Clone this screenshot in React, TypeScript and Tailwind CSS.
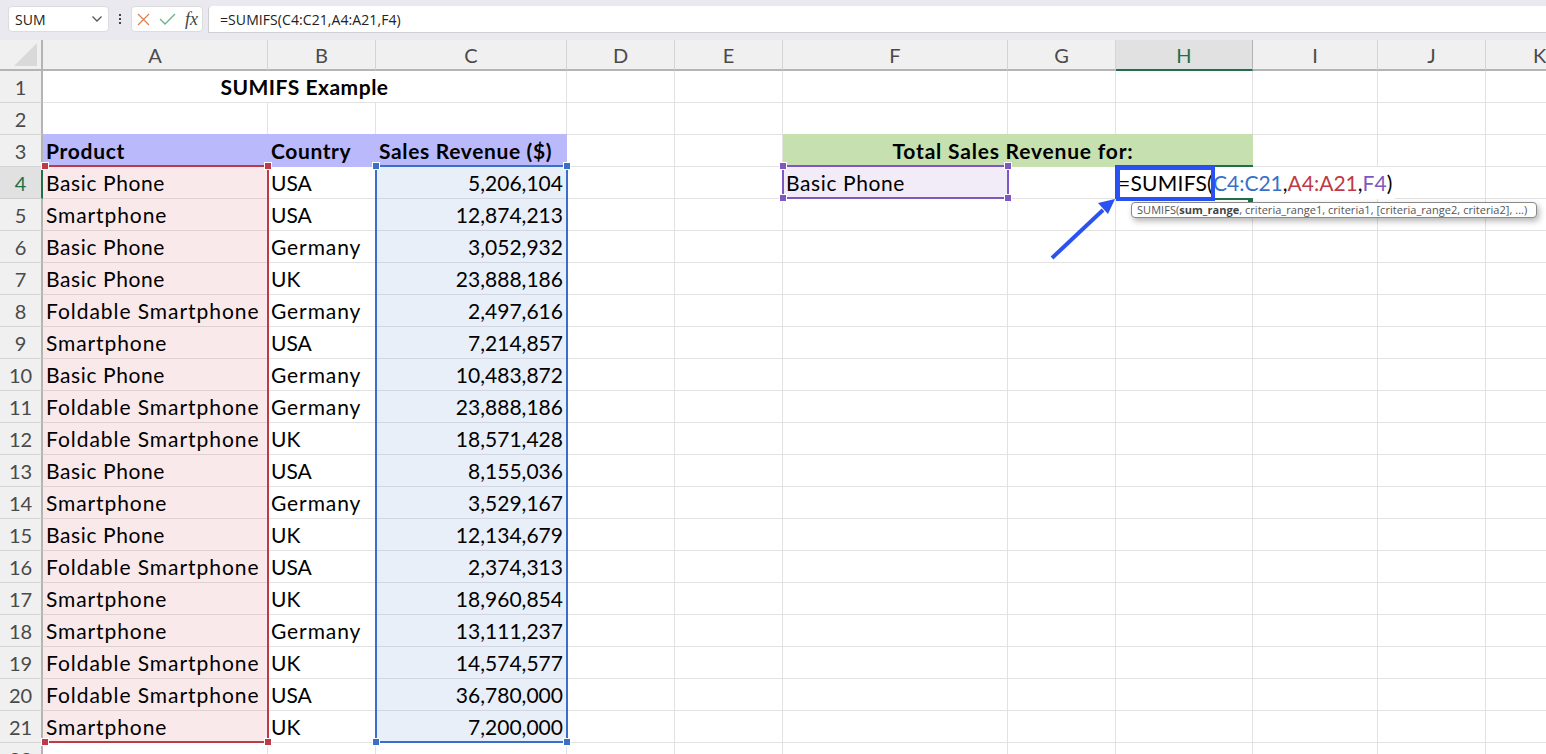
import React from "react";

const cols = ["A", "B", "C", "D", "E", "F", "G", "H", "I", "J", "K"];
const rows: [string, string, string][] = [
  ["Basic Phone", "USA", "5,206,104"],
  ["Smartphone", "USA", "12,874,213"],
  ["Basic Phone", "Germany", "3,052,932"],
  ["Basic Phone", "UK", "23,888,186"],
  ["Foldable Smartphone", "Germany", "2,497,616"],
  ["Smartphone", "USA", "7,214,857"],
  ["Basic Phone", "Germany", "10,483,872"],
  ["Foldable Smartphone", "Germany", "23,888,186"],
  ["Foldable Smartphone", "UK", "18,571,428"],
  ["Basic Phone", "USA", "8,155,036"],
  ["Smartphone", "Germany", "3,529,167"],
  ["Basic Phone", "UK", "12,134,679"],
  ["Foldable Smartphone", "USA", "2,374,313"],
  ["Smartphone", "UK", "18,960,854"],
  ["Smartphone", "Germany", "13,111,237"],
  ["Foldable Smartphone", "UK", "14,574,577"],
  ["Foldable Smartphone", "USA", "36,780,000"],
  ["Smartphone", "UK", "7,200,000"],
];

const track: Record<string, string> = {
  "Basic Phone": "tracking-[0.6px]",
  Smartphone: "tracking-[0.9px]",
  "Foldable Smartphone": "tracking-[0.95px]",
  Germany: "tracking-[0.9px]",
  USA: "",
  UK: "",
};

const cell = "border-r border-b border-[#e2e2e2] flex items-center min-w-0 whitespace-nowrap";
const rowHead = "border-r-2 border-b border-r-[#b4b4b4] border-b-[#d4d4d4] bg-[#f0f0f0] text-[#4a4a4a] flex items-center justify-center text-[20px]";
const pink = "bg-[#f9e9ea] border-b-[#dfd0d2] border-r-[#f9e9ea] pl-[3px]";
const blue = "bg-[#e9eff8] border-b-[#cfd6df] border-r-[#e9eff8] justify-end pr-[3px] tracking-[0.02px]";

function Handle({ className }: { className: string }) {
  return <div className={"absolute w-[8px] h-[8px] border border-white " + className} />;
}

function Blanks({ n }: { n: number }) {
  return (
    <>
      {Array.from({ length: n }).map((_, i) => (
        <div key={i} className={cell} />
      ))}
    </>
  );
}

export default function App() {
  return (
    <div
      className="w-[1546px] h-[754px] overflow-hidden bg-white text-black text-[21px] flex flex-col"
      style={{ fontFamily: '"Lato", "Open Sans", sans-serif' }}
    >
      {/* formula bar */}
      <div className="h-[40px] shrink-0 bg-[#e9e9ef] flex items-start pt-[6px] pl-[8px]">
        <div className="w-[101px] h-[26px] bg-white rounded-[4px] border border-[#dcdcdc] flex items-center justify-between pl-[6px] pr-[5px] text-[14px] text-[#222]">
          <span style={{ fontFamily: '"Open Sans", sans-serif' }}>SUM</span>
          <svg width="12" height="8" viewBox="0 0 12 8" fill="none" stroke="#555" strokeWidth="1.3">
            <path d="M1.5 1.5 L6 6 L10.5 1.5" />
          </svg>
        </div>
        <div className="w-[22px] h-[26px] flex flex-col items-center justify-center gap-[2px]">
          <span className="w-[2px] h-[2px] bg-[#444]" />
          <span className="w-[2px] h-[2px] bg-[#444]" />
          <span className="w-[2px] h-[2px] bg-[#444]" />
        </div>
        <div className="w-[72px] h-[26px] bg-white rounded-[4px] border border-[#dcdcdc] flex items-center pl-[5px] gap-[9px]">
          <svg width="13" height="13" viewBox="0 0 13 13" fill="none" stroke="#dc8258" strokeWidth="1.3">
            <path d="M1 1 L12 12 M12 1 L1 12" />
          </svg>
          <svg width="17" height="12" viewBox="0 0 17 12" fill="none" stroke="#6fb08a" strokeWidth="1.3">
            <path d="M1 6 L6 11 L16 1" />
          </svg>
          <span className="italic text-[18px] leading-none text-[#444]" style={{ fontFamily: '"Liberation Serif", serif' }}>
            fx
          </span>
        </div>
        <div
          className="flex-1 ml-[5px] h-[27px] bg-white rounded-tl-[4px] border-l border-b border-[#cfcfcf] flex items-center pl-[11px] text-[14px] tracking-[0.08px] text-[#222]"
          style={{ fontFamily: '"Open Sans", sans-serif' }}
        >
          =SUMIFS(C4:C21,A4:A21,F4)
        </div>
      </div>

      {/* sheet */}
      <div className="relative flex-1 overflow-hidden">
        <div className="grid w-[1594px] grid-cols-[43px_225px_108px_191px_108px_108px_225px_108px_137px_125px_108px_108px] grid-rows-[31px_repeat(22,32px)]">
          {/* column header */}
          <div className="bg-[#f0f0f0] border-r-2 border-b-2 border-r-[#b4b4b4] border-b-[#b4b4b4] flex items-end justify-end pr-[3px] pb-[3px]">
            <svg width="24" height="23" viewBox="0 0 24 23">
              <polygon points="23,0 23,23 0,23" fill="#d9d9d9" />
            </svg>
          </div>
          {cols.map((c) => (
            <div
              key={c}
              className={
                "border-r flex items-center justify-center text-[20px] " +
                (c === "H"
                  ? "bg-[#e1e1e1] text-[#1f7048] border-r-[#b4b4b4] border-b-2 border-b-[#1f7048]"
                  : "bg-[#f0f0f0] text-[#4a4a4a] border-r-[#d4d4d4] border-b-2 border-b-[#b4b4b4]")
              }
            >
              {c}
            </div>
          ))}

          {/* row 1 */}
          <div className={rowHead}>1</div>
          <div className={cell + " col-span-3 justify-center font-bold tracking-[0.5px]"}>SUMIFS Example</div>
          <Blanks n={8} />

          {/* row 2 */}
          <div className={rowHead}>2</div>
          <Blanks n={11} />

          {/* row 3 */}
          <div className={rowHead}>3</div>
          <div className="bg-[#b9b9fb] shadow-[0_-1px_0_#b9b9fb] flex items-center pl-[3px] font-bold tracking-[0.7px]">Product</div>
          <div className="bg-[#b9b9fb] shadow-[0_-1px_0_#b9b9fb] flex items-center pl-[3px] font-bold tracking-[0.6px]">Country</div>
          <div className="bg-[#b9b9fb] shadow-[0_-1px_0_#b9b9fb] flex items-center pl-[3px] font-bold whitespace-nowrap tracking-[0.65px]">
            Sales Revenue ($)
          </div>
          <Blanks n={2} />
          <div className="col-span-3 bg-[#c6e0b0] shadow-[0_-1px_0_#c6e0b0] flex items-center justify-center pr-[10px] font-bold tracking-[0.8px]">
            Total Sales Revenue for:
          </div>
          <Blanks n={3} />

          {/* data rows */}
          {rows.map((r, i) => {
            const n = i + 4;
            return (
              <React.Fragment key={n}>
                <div
                  className={
                    n === 4
                      ? "border-r-2 border-b border-r-[#1f7048] border-b-[#cfcfcf] bg-[#e1e1e1] text-[#1f7048] flex items-center justify-center text-[20px]"
                      : rowHead
                  }
                >
                  {n}
                </div>
                <div className={cell + " " + pink + " " + track[r[0]]}>{r[0]}</div>
                <div className={cell + " pl-[3px] " + track[r[1]]}>{r[1]}</div>
                <div className={cell + " " + blue}>{r[2]}</div>
                <Blanks n={2} />
                {n === 4 ? (
                  <>
                    <div className={cell + " bg-[#f1ecf8] pl-[3px] tracking-[0.6px]"}>Basic Phone</div>
                    <div className={cell} />
                    <div className={cell + " relative z-10"}>
                      <div className="absolute left-0 top-0 h-[32px] w-[279px] bg-white pl-[2px] flex items-center">
                        <span className="tracking-[0.25px]">=SUMIFS(</span>
                        <span className="text-[#3a6fc6]">C4:C21</span>
                        <span>,</span>
                        <span className="text-[#be3a46]">A4:A21</span>
                        <span>,</span>
                        <span className="text-[#7e57c2]">F4</span>
                        <span>)</span>
                      </div>
                    </div>
                    <Blanks n={3} />
                  </>
                ) : (
                  <Blanks n={6} />
                )}
              </React.Fragment>
            );
          })}

          {/* row 22 */}
          <div className={rowHead}>22</div>
          <Blanks n={11} />
        </div>

        {/* range selections */}
        <div className="absolute left-[44px] top-[125px] w-[225px] h-[578px] border-t-2 border-r-2 border-b-2 border-[#be3a46]">
          <Handle className="left-[-3px] top-[-5px] bg-[#be3a46]" />
          <Handle className="right-[-5px] top-[-5px] bg-[#be3a46]" />
          <Handle className="left-[-3px] bottom-[-5px] bg-[#be3a46]" />
          <Handle className="right-[-5px] bottom-[-5px] bg-[#be3a46]" />
        </div>
        <div className="absolute left-[375px] top-[125px] w-[193px] h-[578px] border-2 border-[#3a6fc6]">
          <Handle className="left-[-5px] top-[-5px] bg-[#3a6fc6]" />
          <Handle className="right-[-5px] top-[-5px] bg-[#3a6fc6]" />
          <Handle className="left-[-5px] bottom-[-5px] bg-[#3a6fc6]" />
          <Handle className="right-[-5px] bottom-[-5px] bg-[#3a6fc6]" />
        </div>
        <div className="absolute left-[782px] top-[125px] w-[227px] h-[34px] border-2 border-[#7e57c2]">
          <Handle className="left-[-5px] top-[-5px] bg-[#7e57c2]" />
          <Handle className="right-[-5px] top-[-5px] bg-[#7e57c2]" />
          <Handle className="left-[-5px] bottom-[-5px] bg-[#7e57c2]" />
          <Handle className="right-[-5px] bottom-[-5px] bg-[#7e57c2]" />
        </div>

        {/* active cell */}
        <div className="absolute left-[1115px] top-[125px] w-[138px] h-[34px] border-t-2 border-l-2 border-[#1f7048] z-20 pointer-events-none" />
        <div className="absolute left-[1214px] top-[158px] w-[34px] h-[2px] bg-[#1f7048] z-20" />
        <div className="absolute left-[1248px] top-[158px] w-[5px] h-[5px] bg-[#1f7048] z-20" />
        <div className="absolute left-[1116px] top-[126px] w-[99px] h-[35px] border-[4px] border-[#2a52f2] z-30" />

        {/* tooltip */}
        <div
          className="absolute left-[1131px] top-[162px] w-[406px] h-[16px] bg-white border border-[#8a8a8a] rounded-[4px] shadow-[2px_3px_6px_rgba(0,0,0,0.3)] flex items-center pl-[5px] text-[11px] tracking-[0.04px] text-[#555] whitespace-nowrap z-40"
          style={{ fontFamily: '"Open Sans", sans-serif' }}
        >
          SUMIFS(<b className="text-[#444]">sum_range</b>, criteria_range1, criteria1, [criteria_range2, criteria2], ...)
        </div>

        {/* arrow */}
        <svg className="absolute left-[1045px] top-[155px] z-40" width="75" height="70" viewBox="0 0 75 70">
          <line x1="7" y1="63" x2="58" y2="15" stroke="#2a52f2" strokeWidth="4" />
          <polygon points="70,4 53,8 63,19" fill="#2a52f2" />
        </svg>
      </div>
    </div>
  );
}
